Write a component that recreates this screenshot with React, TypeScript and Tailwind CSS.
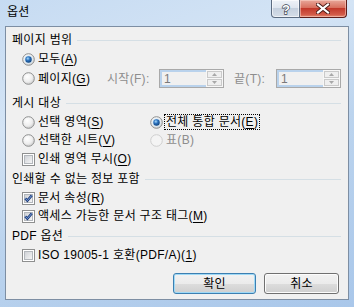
import React from "react";

const U = ({ children }: { children: React.ReactNode }) => (
  <span className="underline underline-offset-[2px]">{children}</span>
);

function Radio({ checked = false, disabled = false }: { checked?: boolean; disabled?: boolean }) {
  return (
    <svg width="13" height="13" viewBox="0 0 13 13" className="shrink-0">
      <defs>
        <radialGradient id="rbg" cx="0.4" cy="0.35" r="0.7">
          <stop offset="0" stopColor="#ffffff" />
          <stop offset="0.6" stopColor="#eeeeee" />
          <stop offset="1" stopColor="#c9c9c9" />
        </radialGradient>
        <radialGradient id="rdot" cx="0.4" cy="0.35" r="0.7">
          <stop offset="0" stopColor="#a9dcfb" />
          <stop offset="0.45" stopColor="#2a70bd" />
          <stop offset="1" stopColor="#123f72" />
        </radialGradient>
      </defs>
      <circle
        cx="6.5"
        cy="6.5"
        r="5.8"
        fill={disabled ? "#f4f4f4" : "url(#rbg)"}
        stroke={disabled ? "#cfcfcf" : "#8e8f8f"}
        strokeWidth="1"
      />
      {checked && (
        <>
          <circle cx="6.5" cy="6.5" r="4" fill="#cfe6f8" />
          <circle cx="6.5" cy="6.5" r="3.2" fill="url(#rdot)" />
        </>
      )}
    </svg>
  );
}

function Check({ checked = false }: { checked?: boolean }) {
  return (
    <svg width="13" height="13" viewBox="0 0 13 13" className="shrink-0">
      <defs>
        <linearGradient id="cbg" x1="0" y1="0" x2="1" y2="1">
          <stop offset="0" stopColor="#cdd0d5" />
          <stop offset="1" stopColor="#f7f7f7" />
        </linearGradient>
      </defs>
      <rect x="0.5" y="0.5" width="12" height="12" fill="#ffffff" stroke="#8e8f8f" />
      <rect x="2.5" y="2.5" width="8" height="8" fill="url(#cbg)" stroke="#b3b7bc" />
      {checked && (
        <>
          <path d="M3.2 6.3 L5.4 8.6 L9.8 3.4" fill="none" stroke="#1e3b78" strokeWidth="2.4" />
          <path d="M3.2 6.3 L5.4 8.6 L9.8 3.4" fill="none" stroke="#7aa3e0" strokeWidth="1" />
        </>
      )}
    </svg>
  );
}

function Header({ children }: { children: React.ReactNode }) {
  return (
    <div className="flex items-center h-[16px] pl-[6px] pr-[7px]">
      <span className="whitespace-nowrap">{children}</span>
      <div className="flex-1 h-px bg-[#d5dfe5] ml-[5px]" />
    </div>
  );
}

function Spin() {
  return (
    <div className="w-[65px] h-[19px] border border-[#a9a9a9] bg-[#f0f0f0] flex">
      <div className="flex-1 border-t-2 border-b-2 border-l-2 border-[#b9d2ec] flex items-center pl-[2px] text-[#7a7a7a] leading-[12px]">
        1
      </div>
      <div className="w-[17px] flex flex-col gap-px p-px bg-[#f7f7f7]">
        <div className="flex-1 border border-[#cacaca] bg-[#efefef] flex items-center justify-center">
          <svg width="5" height="3" viewBox="0 0 5 3">
            <path d="M0 3 L2.5 0 L5 3 Z" fill="#a8a8a8" />
          </svg>
        </div>
        <div className="flex-1 border border-[#cacaca] bg-[#efefef] flex items-center justify-center">
          <svg width="5" height="3" viewBox="0 0 5 3">
            <path d="M0 0 L2.5 3 L5 0 Z" fill="#a8a8a8" />
          </svg>
        </div>
      </div>
    </div>
  );
}

function Row({ children, className = "" }: { children: React.ReactNode; className?: string }) {
  return <div className={"flex items-center h-[18px] pl-[16px] " + className}>{children}</div>;
}

export default function App() {
  return (
    <div className="w-[354px] h-[307px] flex flex-col overflow-hidden font-['Liberation_Sans','Noto_Sans_CJK_KR',sans-serif] text-[12px] leading-[16px] tracking-[0.3px] text-black bg-[linear-gradient(160deg,#c6dbf2_0%,#d4e4f5_30%,#bcd4ee_55%,#a9c7ea_100%)]">
      {/* title bar */}
      <div className="h-[26px] flex items-start justify-between shrink-0">
        <div className="pl-[7px] pt-[4px] text-[12px] leading-[16px]">옵션</div>
        <div className="flex mr-[7px]">
          <div className="w-[29px] h-[18px] rounded-bl-[4px] border border-t-0 border-[#5b6b80] bg-[linear-gradient(180deg,#eef2f8_0%,#dfe6ef_45%,#c5d0de_50%,#d5dde8_100%)] shadow-[inset_0_0_0_1px_rgba(255,255,255,0.6)] flex items-center justify-center">
            <svg width="12" height="14" viewBox="0 0 12 14">
              <text
                x="6"
                y="12"
                textAnchor="middle"
                fontFamily="Liberation Sans, sans-serif"
                fontWeight="bold"
                fontSize="13"
                fill="#ffffff"
                stroke="#3a4250"
                strokeWidth="1.3"
                paintOrder="stroke"
              >
                ?
              </text>
            </svg>
          </div>
          <div className="w-[47px] h-[18px] rounded-br-[4px] border border-t-0 border-l-0 border-[#5e1e1a] bg-[linear-gradient(180deg,#e8a89b_0%,#d8705f_45%,#c2392b_50%,#d25a48_85%,#e38a72_100%)] shadow-[inset_0_0_0_1px_rgba(255,220,210,0.5)] flex items-center justify-center">
            <svg width="14" height="11" viewBox="0 0 14 11">
              <path d="M2 1.5 L12 9.5 M12 1.5 L2 9.5" stroke="#4a1a16" strokeWidth="4" strokeLinecap="square" />
              <path d="M2 1.5 L12 9.5 M12 1.5 L2 9.5" stroke="#ffffff" strokeWidth="2.2" strokeLinecap="square" />
            </svg>
          </div>
        </div>
      </div>

      {/* client area */}
      <div className="ml-[5px] w-[344px] h-[274px] border border-[#7d8ea3] bg-[#f0f0f0] flex flex-col shrink-0">
        <div className="h-[5px]" />
        <Header>페이지 범위</Header>
        <Row className="mt-[2px]">
          <Radio checked />
          <span className="ml-[3px]">
            모두(<U>A</U>)
          </span>
        </Row>
        <div className="flex items-center h-[19px] pl-[16px] mt-[1px]">
          <div className="w-[85px] flex items-center">
            <Radio />
            <span className="ml-[3px]">
              페이지(<U>G</U>)
            </span>
          </div>
          <span className="w-[52px] text-[#8d8d8d]">시작(F):</span>
          <Spin />
          <span className="w-[42px] ml-[10px] text-[#8d8d8d]">끝(T):</span>
          <Spin />
        </div>

        <div className="mt-[7px]">
          <Header>게시 대상</Header>
        </div>
        <Row className="mt-[2px]">
          <div className="w-[128px] flex items-center">
            <Radio />
            <span className="ml-[3px]">
              선택 영역(<U>S</U>)
            </span>
          </div>
          <Radio checked />
          <span className="ml-[1px] border border-dotted border-black px-[1px] leading-[14px]">
            전체 통합 문서(<U>E</U>)
          </span>
        </Row>
        <Row>
          <div className="w-[128px] flex items-center">
            <Radio />
            <span className="ml-[3px]">
              선택한 시트(<U>V</U>)
            </span>
          </div>
          <Radio disabled />
          <span className="ml-[3px] text-[#8d8d8d]">표(B)</span>
        </Row>
        <Row className="mt-[1px]">
          <Check />
          <span className="ml-[3px]">
            인쇄 영역 무시(<U>O</U>)
          </span>
        </Row>

        <div className="mt-[3px]">
          <Header>인쇄할 수 없는 정보 포함</Header>
        </div>
        <Row className="mt-[2px]">
          <Check checked />
          <span className="ml-[3px]">
            문서 속성(<U>R</U>)
          </span>
        </Row>
        <Row>
          <Check checked />
          <span className="ml-[3px]">
            액세스 가능한 문서 구조 태그(<U>M</U>)
          </span>
        </Row>

        <div className="mt-[3px]">
          <Header>PDF 옵션</Header>
        </div>
        <Row className="mt-[2px]">
          <Check />
          <span className="ml-[3px]">
            ISO 19005-1 호환(PDF/A)(<U>1</U>)
          </span>
        </Row>

        <div className="flex justify-end gap-[8px] pr-[9px] mt-[9px]">
          <button className="w-[83px] h-[21px] rounded-[3px] border border-[#3c7fb1] bg-[linear-gradient(180deg,#f2f2f2_0%,#ebebeb_50%,#dddddd_50%,#cfcfcf_100%)] shadow-[inset_0_0_0_1px_#9fd9f6] flex items-center justify-center leading-[14px]">
            확인
          </button>
          <button className="w-[75px] h-[21px] rounded-[3px] border border-[#707070] bg-[linear-gradient(180deg,#f2f2f2_0%,#ebebeb_50%,#dddddd_50%,#cfcfcf_100%)] shadow-[inset_0_0_0_1px_#fcfcfc] flex items-center justify-center leading-[14px]">
            취소
          </button>
        </div>
      </div>
    </div>
  );
}
